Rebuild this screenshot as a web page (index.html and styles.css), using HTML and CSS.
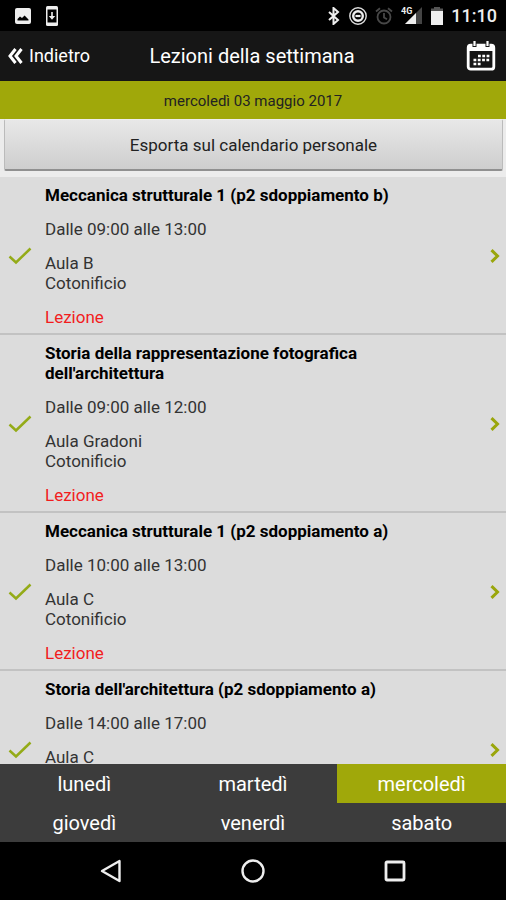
FILE: index.html
```html
<!DOCTYPE html>
<html lang="it">
<head>
    <meta charset="UTF-8">
    <meta name="viewport" content="width=device-width, initial-scale=1.0">
    <title>Lezioni della settimana</title>
    <link rel="stylesheet" href="styles.css">
</head>
<body>

<!-- Icone ripetute nella lista -->
<svg class="symbols" aria-hidden="true">
    <symbol id="check" viewBox="0 0 24 18">
        <path d="M1.5 9.5l6.5 6L22.500 1.500" fill="none" stroke="currentColor" stroke-width="2.5"/>
    </symbol>
    <symbol id="chevron" viewBox="0 0 10 14">
        <path d="M1.5 1.2L7.5 7l-6 5.800" fill="none" stroke="currentColor" stroke-width="3"/>
    </symbol>
</svg>

<div class="app">
    <!-- Barra di stato -->
    <div class="status-bar">
        <div class="status-left">
            <svg width="18" height="18" viewBox="0 0 18 18">
                <rect x="1" y="1" width="16" height="16" rx="2" fill="#eee"/>
                <path d="M3.5 13.5v-1.500l2.500-2.500 2 1.500 2.600-2.500 3.900 4v1z" fill="#000"/>
            </svg>
            <svg width="14" height="20" viewBox="0 0 14 20">
                <rect x="1" y="0" width="12" height="20" rx="1.5" fill="#eee"/>
                <path d="M2.5 3.5h9v13h-9z" fill="#000"/>
                <path d="M6.2 6h1.6v4h2.4L7 13.8 3.8 10h2.4z" fill="#eee"/>
            </svg>
        </div>
        <div class="status-right">
            <svg width="14" height="18" viewBox="0 0 14 18">
                <path d="M2 5l9 8-4.5 4V1L11 5l-9 8" fill="none" stroke="#eee" stroke-width="2"/>
            </svg>
            <svg width="18" height="18" viewBox="0 0 18 18">
                <circle cx="9" cy="9" r="8.2" fill="none" stroke="#ddd" stroke-width="1.4"/>
                <circle cx="9" cy="9" r="4.800" fill="none" stroke="#eee" stroke-width="2.400"/>
                <path d="M6.500 9h5" stroke="#eee" stroke-width="2.200"/>
            </svg>
            <svg width="18" height="18" viewBox="0 0 18 18">
                <g fill="none" stroke="#484848" stroke-width="1.8">
                    <circle cx="9" cy="10" r="6.5"/>
                    <path d="M9 6v4.5l3 1.8M1 4.5L5 1.2M17 4.5l-4-3.3"/>
                </g>
            </svg>
            <svg width="22" height="20" viewBox="0 0 22 20">
                <path d="M21 1v17H4z" fill="#444"/>
                <path d="M15 7v11H4z" fill="#eee"/>
                <path d="M0 0h12v9H0z" fill="#000"/>
                <text x="0" y="8" font-size="9" font-weight="700" fill="#eee">4G</text>
            </svg>
            <svg width="12" height="18" viewBox="0 0 12 18">
                <path d="M3 0h6v1.5h3V5H0V1.500h3z" fill="#555"/>
                <path d="M0 4h12v14H0z" fill="#eee"/>
            </svg>
            <span class="clock">11:10</span>
        </div>
    </div>

    <!-- Intestazione -->
    <header class="header">
        <a class="back" href="#">
            <svg width="15" height="16" viewBox="0 0 15 16">
                <path d="M7.500 1L2 8l5.500 7M13.500 1L8 8l5.500 7" fill="none" stroke="#fff" stroke-width="3"/>
            </svg>
            Indietro
        </a>
        <h1>Lezioni della settimana</h1>
        <button class="calendar" type="button" aria-label="Calendario">
            <svg width="30" height="30" viewBox="0 0 30 30">
                <rect x="2.200" y="4.200" width="25.600" height="24" rx="2.500" fill="none" stroke="#fff" stroke-width="2.800"/>
                <path d="M2 4h26v6H2z" fill="#fff"/>
                <path d="M8.500 0v6M21.500 0v6" stroke="#161616" stroke-width="4"/>
                <path d="M8.500 0v5M21.500 0v5" stroke="#fff" stroke-width="2.200"/>
                <path d="M12 15h11.500M7.500 19h16M7.500 23h7.500" stroke="#fff" stroke-width="2.600" stroke-dasharray="2.800 1.500"/>
            </svg>
        </button>
    </header>

    <div class="date">mercoledì 03 maggio 2017</div>

    <div class="export">
        <button type="button">Esporta sul calendario personale</button>
    </div>

    <!-- Elenco delle lezioni -->
    <main class="lessons">
        <a class="lesson" href="#">
            <svg class="check"><use href="#check"/></svg>
            <div class="info">
                <h2>Meccanica strutturale 1 (p2 sdoppiamento b)</h2>
                <p>Dalle 09:00 alle 13:00</p>
                <p>Aula B<br>Cotonificio</p>
                <p class="type">Lezione</p>
            </div>
            <svg class="chevron"><use href="#chevron"/></svg>
        </a>
        <a class="lesson" href="#">
            <svg class="check"><use href="#check"/></svg>
            <div class="info">
                <h2>Storia della rappresentazione fotografica dell'architettura</h2>
                <p>Dalle 09:00 alle 12:00</p>
                <p>Aula Gradoni<br>Cotonificio</p>
                <p class="type">Lezione</p>
            </div>
            <svg class="chevron"><use href="#chevron"/></svg>
        </a>
        <a class="lesson" href="#">
            <svg class="check"><use href="#check"/></svg>
            <div class="info">
                <h2>Meccanica strutturale 1 (p2 sdoppiamento a)</h2>
                <p>Dalle 10:00 alle 13:00</p>
                <p>Aula C<br>Cotonificio</p>
                <p class="type">Lezione</p>
            </div>
            <svg class="chevron"><use href="#chevron"/></svg>
        </a>
        <a class="lesson" href="#">
            <svg class="check"><use href="#check"/></svg>
            <div class="info">
                <h2>Storia dell'architettura (p2 sdoppiamento a)</h2>
                <p>Dalle 14:00 alle 17:00</p>
                <p>Aula C<br>Cotonificio</p>
                <p class="type">Lezione</p>
            </div>
            <svg class="chevron"><use href="#chevron"/></svg>
        </a>
    </main>

    <!-- Giorni della settimana -->
    <nav class="days">
        <button type="button">lunedì</button>
        <button type="button">martedì</button>
        <button type="button" class="active">mercoledì</button>
        <button type="button">giovedì</button>
        <button type="button">venerdì</button>
        <button type="button">sabato</button>
    </nav>

    <!-- Tasti di sistema -->
    <div class="system-bar">
        <button type="button" aria-label="Indietro">
            <svg width="24" height="24" viewBox="0 0 24 24">
                <path d="M20.500 2v20L3 12z" fill="none" stroke="#eee" stroke-width="2.400" stroke-linejoin="round"/>
            </svg>
        </button>
        <button type="button" aria-label="Home">
            <svg width="24" height="24" viewBox="0 0 24 24">
                <circle cx="12" cy="12" r="10.500" fill="none" stroke="#eee" stroke-width="2.400"/>
            </svg>
        </button>
        <button type="button" aria-label="Recenti">
            <svg width="24" height="24" viewBox="0 0 24 24">
                <rect x="3" y="3" width="18" height="18" rx="1" fill="none" stroke="#eee" stroke-width="2.800"/>
            </svg>
        </button>
    </div>
</div>

</body>
</html>
```
FILE: styles.css
```css
* {
    box-sizing: border-box;
}

body {
    margin: 0;
    font-family: Roboto, Arial, sans-serif;
    font-size: 17px;
    line-height: 20px;
    background-color: #dcdcdc;
    color: #333;
}

button {
    font-family: inherit;
    border: none;
    padding: 0;
    cursor: pointer;
}

a {
    color: inherit;
    text-decoration: none;
}

svg {
    display: block;
    flex-shrink: 0;
}

.symbols {
    position: absolute;
    width: 0;
    height: 0;
}

.app {
    display: flex;
    flex-direction: column;
    height: 100vh;
}

.status-bar {
    display: flex;
    justify-content: space-between;
    align-items: center;
    flex-shrink: 0;
    height: 31px;
    padding: 0 9px 0 14px;
    background-color: #000;
}

.status-left,
.status-right {
    display: flex;
    align-items: center;
}

.status-left {
    gap: 13px;
}

.status-right {
    gap: 8px;
}

.clock {
    color: #eee;
    font-size: 18px;
    font-weight: 500;
}

.header {
    display: grid;
    grid-template-columns: 1fr auto 1fr;
    align-items: center;
    flex-shrink: 0;
    height: 50px;
    padding: 0 10px 0 8px;
    background-color: #161616;
    color: #fff;
}

.back {
    display: flex;
    align-items: center;
    gap: 6px;
    font-size: 18px;
}

.header h1 {
    margin: 0;
    font-size: 20px;
    font-weight: 400;
}

.calendar {
    justify-self: end;
    background: none;
}

.date {
    flex-shrink: 0;
    padding: 10px 0 8px;
    background-color: #a0a80a;
    color: #222;
    font-size: 15px;
    text-align: center;
}

.export {
    flex-shrink: 0;
    padding: 0 3px 6px 4px;
    background-color: #ececec;
}

.export button {
    width: 100%;
    height: 52px;
    border: 1px solid #bbb;
    border-top-color: #eee;
    border-bottom: 2px solid #909090;
    border-radius: 2px;
    background: linear-gradient(#e8e8e8, #cecece);
    color: #222;
    font-size: 17px;
}

.lessons {
    flex: 1;
    min-height: 0;
    overflow-y: auto;
    scrollbar-width: none;
}

.lesson {
    display: flex;
    align-items: center;
    padding: 8px 6px 6px 8px;
    border-bottom: 2px solid #c2c2c2;
}

.check {
    width: 24px;
    height: 18px;
    color: #94ab18;
}

.info {
    flex: 1;
    display: flex;
    flex-direction: column;
    gap: 14px;
    padding: 0 60px 0 13px;
}

.info h2,
.info p {
    margin: 0;
    font-size: 17px;
}

.info h2 {
    color: #000;
    font-weight: 700;
}

.info .type {
    color: #f21d1d;
}

.chevron {
    width: 10px;
    height: 14px;
    color: #9aa60c;
}

.days {
    display: grid;
    grid-template-columns: repeat(3, 1fr);
    flex-shrink: 0;
    background-color: #3c3c3c;
}

.days button {
    height: 39px;
    background: none;
    color: #fff;
    font-size: 20px;
}

.days .active {
    background-color: #a0a80a;
}

.system-bar {
    display: flex;
    justify-content: center;
    align-items: center;
    gap: 118px;
    flex-shrink: 0;
    height: 58px;
    background-color: #000;
}

.system-bar button {
    background: none;
}
```
